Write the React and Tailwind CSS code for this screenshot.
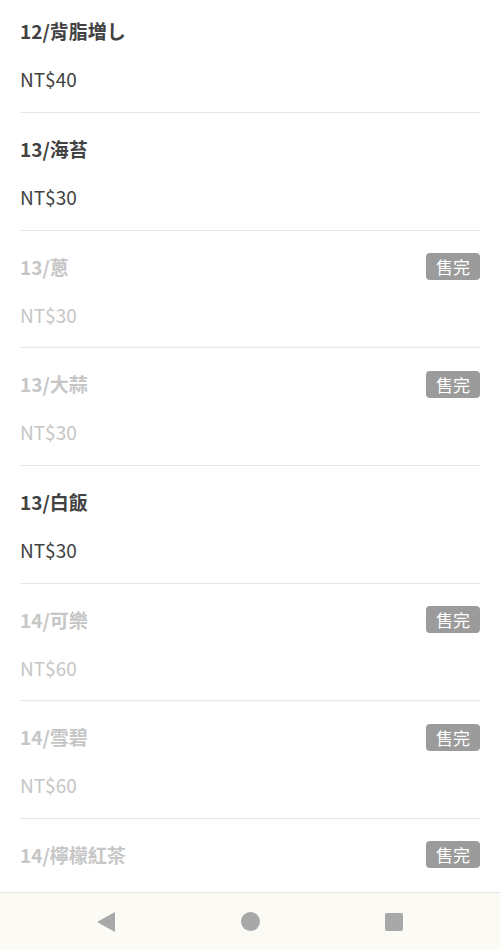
const items = [
  { name: '12/背脂増し', price: 40, soldOut: false },
  { name: '13/海苔', price: 30, soldOut: false },
  { name: '13/蔥', price: 30, soldOut: true },
  { name: '13/大蒜', price: 30, soldOut: true },
  { name: '13/白飯', price: 30, soldOut: false },
  { name: '14/可樂', price: 60, soldOut: true },
  { name: '14/雪碧', price: 60, soldOut: true },
  { name: '14/檸檬紅茶', price: 60, soldOut: true },
];

const MenuItem = ({ item }) => {
  const color = item.soldOut ? 'text-[#c6c6c6]' : 'text-[#424242]';
  return (
    <div className="h-[117.67px] shrink-0 px-5">
      <div className="h-full border-b border-[#e6e6e6] pt-6">
        <div className="flex items-center justify-between h-6">
          <span className={`text-[19px] leading-6 font-bold ${color}`}>{item.name}</span>
          {item.soldOut && (
            <span className="bg-[#9b9b9b] text-white text-[17px] leading-[27px] h-[27px] w-[54px] text-center rounded-[4px]">
              售完
            </span>
          )}
        </div>
        <div className={`mt-6 text-[19px] leading-6 ${color}`}>NT${item.price}</div>
      </div>
    </div>
  );
};

export default function App() {
  return (
    <div
      className="w-[500px] h-[950px] flex flex-col overflow-hidden bg-white"
      style={{ fontFamily: '"Noto Sans CJK TC", "Noto Sans", sans-serif' }}
    >
      <div className="flex-1 overflow-hidden">
        <div className="-mt-[4.67px] flex flex-col">
          {items.map((item) => (
            <MenuItem key={item.name} item={item} />
          ))}
        </div>
      </div>
      <div className="h-[58px] shrink-0 bg-[#fbfaf4] border-t border-[#e8e8df] flex items-center justify-center">
        <div className="w-[144px] flex justify-center">
          <svg width="19" height="20" viewBox="0 0 19 20">
            <polygon points="0,10 18,0 18,20" fill="#a8a8a8" />
          </svg>
        </div>
        <div className="w-[144px] flex justify-center">
          <div className="w-[19px] h-[19px] rounded-full bg-[#a8a8a8]" />
        </div>
        <div className="w-[144px] flex justify-center">
          <div className="w-[18px] h-[18px] rounded-[2px] bg-[#a8a8a8]" />
        </div>
      </div>
    </div>
  );
}
